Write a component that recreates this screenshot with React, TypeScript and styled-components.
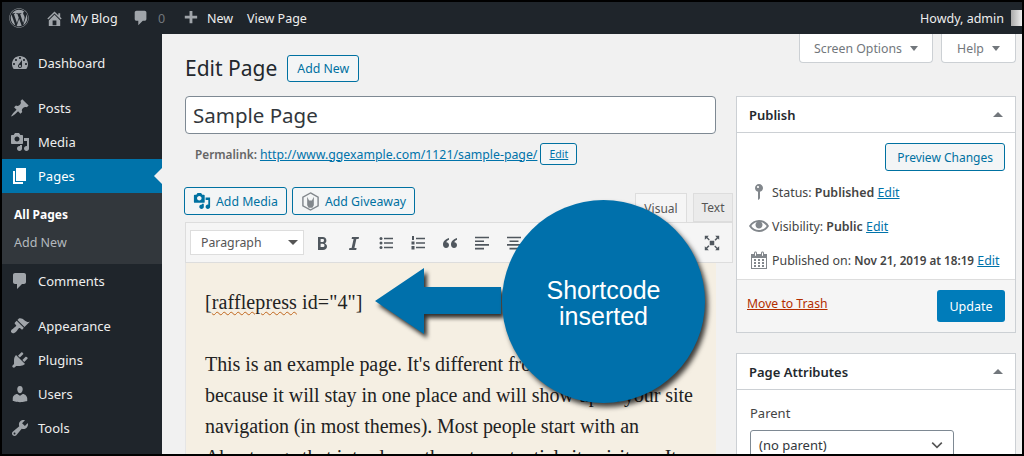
import React from "react";
import styled, { createGlobalStyle } from "styled-components";
import { FaWordpress } from "react-icons/fa";

const Global = createGlobalStyle`
  html, body { margin: 0; padding: 0; background: #000; }
  * { box-sizing: border-box; }
`;

const d = {
  home: "M16 8.5l1.53 1.53-1.06 1.06L10 4.62l-6.47 6.47-1.06-1.06L10 2.5l4 4v-2h2v4zm-6-2.46l6 5.99V18H4v-5.97zM12 17v-5H8v5h4z",
  comment: "M5 2h9c1.1 0 2 .9 2 2v7c0 1.1-.9 2-2 2h-2l-5 5v-5H5c-1.1 0-2-.9-2-2V4c0-1.1.9-2 2-2z",
  plus: "M17 7v3h-5v5H9v-5H4V7h5V2h3v5h5z",
  dashboard: "M3.76 16h12.48c1.1-1.37 1.76-3.11 1.76-5 0-4.42-3.58-8-8-8s-8 3.58-8 8c0 1.89.66 3.63 1.76 5zM10 4c.55 0 1 .45 1 1s-.45 1-1 1-1-.45-1-1 .45-1 1-1zM6 6c.55 0 1 .45 1 1s-.45 1-1 1-1-.45-1-1 .45-1 1-1zm8 0c.55 0 1 .45 1 1s-.45 1-1 1-1-.45-1-1 .45-1 1-1zm-5.37 5.55L12 7v6c0 1.1-.9 2-2 2s-2-.9-2-2c0-.57.24-1.08.63-1.45zM4 10c.55 0 1 .45 1 1s-.45 1-1 1-1-.45-1-1 .45-1 1-1zm12 0c.55 0 1 .45 1 1s-.45 1-1 1-1-.45-1-1 .45-1 1-1zm-5 3c0-.55-.45-1-1-1s-1 .45-1 1 .45 1 1 1 1-.45 1-1z",
  post: "M10.44 3.02l1.82-1.82 6.36 6.35-1.83 1.82c-1.05-.68-2.48-.57-3.41.36l-.75.75c-.92.93-1.04 2.35-.35 3.41l-1.83 1.82-2.41-2.41-2.8 2.79c-.42.42-3.38 2.71-3.8 2.29s1.86-3.39 2.28-3.81l2.79-2.79L4.1 9.36l1.83-1.82c1.05.69 2.48.57 3.4-.36l.75-.75c.93-.92 1.05-2.35.36-3.41z",
  media: "M13 11V4c0-.55-.45-1-1-1h-1.67L9 1H5L3.67 3H2c-.55 0-1 .45-1 1v7c0 .55.45 1 1 1h10c.55 0 1-.45 1-1zM7 4.5c1.38 0 2.5 1.12 2.5 2.5S8.38 9.5 7 9.5 4.5 8.38 4.5 7 5.62 4.5 7 4.5zM14 6h5v10.5c0 1.38-1.12 2.5-2.5 2.5S14 17.88 14 16.5s1.12-2.5 2.5-2.5c.17 0 .34.02.5.05V9h-3V6zm-4 8.05V13h2v3.5c0 1.38-1.12 2.5-2.5 2.5S7 17.88 7 16.5 8.12 14 9.5 14c.17 0 .34.02.5.05z",
  page: "M6 15V2h10v13H6zm-1 1h8v2H3V5h2v11z",
  appearance: "M14.48 11.06L7.41 3.99l1.5-1.5c.5-.56 2.3-.47 3.51.32 1.21.8 1.43 1.28 2.91 2.1 1.18.64 2.45 1.26 4.45.85zm-.71.71L6.7 4.7 4.93 6.47c-.39.39-.39 1.02 0 1.41l1.06 1.06c.39.39.39 1.03 0 1.42-.6.6-1.43 1.11-2.21 1.69-.35.26-.7.53-1.01.84C1.43 13.23.28 15.32 1.57 16.61c1.3 1.3 3.38.14 4.72-1.21.31-.31.58-.66.84-1.01.58-.78 1.09-1.61 1.69-2.21.39-.39 1.02-.39 1.41 0l1.06 1.06c.39.39 1.02.39 1.41 0z",
  plugin: "M13.11 4.36L9.87 7.6 8 5.73l3.24-3.24c.35-.34 1.05-.2 1.56.32.52.51.66 1.21.31 1.55zm-8 1.77l.91-1.12 9.01 9.01-1.19.84c-.71.71-2.63 1.16-3.82 1.16H6.14L4.9 17.26c-.59.59-1.54.59-2.12 0-.59-.58-.59-1.53 0-2.12l1.24-1.24v-3.88c0-1.13.4-3.19 1.09-3.89zm7.26 3.97l3.24-3.24c.34-.35 1.04-.21 1.55.31.52.51.66 1.21.31 1.55l-3.24 3.25z",
  users: "M10 9.25c-2.27 0-2.73-3.44-2.73-3.44C7 4.02 7.82 2 9.97 2c2.16 0 2.98 2.02 2.71 3.81 0 0-.41 3.44-2.68 3.44zm0 2.57L12.72 10c2.39 0 4.52 2.33 4.52 4.53v2.49s-3.65 1.13-7.24 1.13c-3.65 0-7.24-1.13-7.24-1.13v-2.49c0-2.25 1.94-4.48 4.47-4.48z",
  tools: "M16.68 9.77c-1.34 1.34-3.3 1.67-4.95.99l-5.41 6.52c-.99.99-2.59.99-3.58 0s-.99-2.59 0-3.57l6.52-5.42c-.68-1.65-.35-3.61.99-4.95 1.28-1.28 3.12-1.62 4.72-1.06l-2.89 2.89 2.82 2.82 2.86-2.87c.53 1.58.18 3.39-1.08 4.65zM3.81 16.21c.4.39 1.04.39 1.43 0 .4-.4.4-1.04 0-1.43-.39-.4-1.03-.4-1.43 0-.39.39-.39 1.03 0 1.43z",
  key: "M14 6c0 1.86-1.28 3.41-3 3.86V16c0 1-2 2-2 2V9.86c-1.72-.45-3-2-3-3.86 0-2.21 1.79-4 4-4s4 1.79 4 4zM8 5c0 .55.45 1 1 1s1-.45 1-1-.45-1-1-1-1 .45-1 1z",
  eye: "M19.7 9.4C17.7 6 14 3.9 10 3.9S2.3 6 .3 9.4L0 10l.3.6c2 3.4 5.7 5.5 9.7 5.5s7.7-2.1 9.7-5.5l.3-.6-.3-.6zM10 14.1c-3.1 0-6-1.6-7.7-4.1C3.6 8 5.7 6.6 8 6.1c-.9.6-1.5 1.7-1.5 2.9 0 1.9 1.6 3.5 3.5 3.5s3.5-1.6 3.5-3.5c0-1.2-.6-2.3-1.5-2.9 2.3.5 4.4 1.9 5.7 3.9-1.7 2.5-4.6 4.1-7.7 4.1z",
  calendar: "M15 4h3v15H2V4h3V3c0-.41.15-.76.44-1.06.29-.29.65-.44 1.06-.44s.77.15 1.06.44c.29.3.44.65.44 1.06v1h4V3c0-.41.15-.76.44-1.06.29-.29.65-.44 1.06-.44s.77.15 1.06.44c.29.3.44.65.44 1.06v1zM6 3v2.5c0 .14.05.26.15.36.09.09.21.14.35.14s.26-.05.35-.14c.1-.1.15-.22.15-.36V3c0-.14-.05-.26-.15-.35-.09-.1-.21-.15-.35-.15s-.26.05-.35.15c-.1.09-.15.21-.15.35zm7 0v2.5c0 .14.05.26.14.36.1.09.22.14.36.14s.26-.05.36-.14c.09-.1.14-.22.14-.36V3c0-.14-.05-.26-.14-.35-.1-.1-.22-.15-.36-.15s-.26.05-.36.15c-.09.09-.14.21-.14.35zm4 15V8H3v10h14zM7 9v2H5V9h2zm2 0h2v2H9V9zm4 2V9h2v2h-2zm-6 1v2H5v-2h2zm2 0h2v2H9v-2zm4 2v-2h2v2h-2zm-6 1v2H5v-2h2zm4 2H9v-2h2v2zm4 0h-2v-2h2v2z",
};

const IconSvg = styled.svg` flex: none; `;
const Icon = ({ p, size = 20, color = "currentColor" }: { p: string; size?: number; color?: string }) => (
  <IconSvg width={size} height={size} viewBox="0 0 20 20" fill={color}><path d={p} /></IconSvg>
);

const Frame = styled.div`
  position: relative;
  width: 1024px; height: 456px; overflow: hidden;
  border: 2px solid #000;
  background: #f1f1f1;
  display: flex; flex-direction: column;
  font-family: "Noto Sans", sans-serif; font-size: 13px; color: #444;
`;
const TopBar = styled.header`
  height: 32px; flex: none; background: #1f252b; color: #eee;
  display: flex; align-items: center; padding-left: 7px; font-size: 12.5px;
  svg { color: #a0a5aa; }
`;
const BarItem = styled.span<{ $w: number; $gap?: number }>`
  width: ${p => p.$w}px; flex: none; display: flex; align-items: center; gap: ${p => p.$gap ?? 8}px; white-space: nowrap;
`;
const Muted = styled.span` color: #72777c; `;
const Howdy = styled.div`
  margin-left: auto; display: flex; align-items: center; gap: 7px;
`;
const Avatar = styled.span`
  width: 11px; height: 16px; background: linear-gradient(90deg, #aaa, #eee);
`;
const Body = styled.div` flex: 1; display: flex; min-height: 0; `;
const Side = styled.nav`
  width: 160px; flex: none; background: #1f252b; padding-top: 12px; color: #eee;
`;
const Item = styled.div<{ $active?: boolean; $gap?: boolean }>`
  position: relative;
  height: 34px; display: flex; align-items: center; gap: 8px; padding-left: 8px;
  margin-top: ${p => (p.$gap ? "11px" : "0")};
  background: ${p => (p.$active ? "#0073aa" : "transparent")};
  color: ${p => (p.$active ? "#fff" : "#eee")};
  svg { color: ${p => (p.$active ? "#fff" : "#a0a5aa")}; }
  ${p => p.$active ? `&::after { content: ""; position: absolute; right: 0; top: 9px; border: 8px solid transparent; border-right-color: #f1f1f1; border-left-width: 0; }` : ""}
`;
const Sub = styled.div`
  height: 71px; background: #32373c; padding: 8px 0 0 12px; display: flex; flex-direction: column;
`;
const SubLink = styled.div<{ $on?: boolean }>`
  height: 28px; line-height: 28px; font-size: ${p => (p.$on ? 12 : 12.5)}px; font-weight: ${p => (p.$on ? 700 : 400)};
  color: ${p => (p.$on ? "#fff" : "#b4b9be")};
`;
const Main = styled.main` position: relative; flex: 1; display: flex; padding-left: 23px; min-width: 0; `;
const Left = styled.div` width: 548px; flex: none; `;
const Right = styled.aside` width: 280px; flex: none; margin-left: 3px; padding-top: 62px; `;
const HeadRow = styled.div` height: 62px; display: flex; align-items: center; gap: 10px; padding-top: 6px; `;
const H1 = styled.h1` margin: 0; font-size: 21px; font-weight: 400; color: #23282d; `;
const OutlineBtn = styled.a<{ $h?: number; $fs?: number; $px?: number }>`
  display: inline-flex; align-items: center; justify-content: center; gap: 5px;
  height: ${p => p.$h ?? 28}px; padding: 0 ${p => p.$px ?? 9}px; border: 1px solid #0071a1; border-radius: 3px;
  color: #0071a1; background: #f3f5f6; font-size: ${p => p.$fs ?? 12.3}px; white-space: nowrap;
`;
const TitleInput = styled.div`
  width: 531px; height: 38px; background: #fff; border: 1px solid #7e8993; border-radius: 4px;
  display: flex; align-items: center; padding-left: 7px; font-size: 20.5px; color: #32373c;
`;
const Permalink = styled.div`
  height: 22px; margin: 9px 0 0 10px; display: flex; align-items: center; gap: 3px; font-size: 12.3px; color: #666;
  b { font-weight: 600; font-size: 11.8px; margin-right: 0; }
  a { color: #0073aa; text-decoration: underline; }
`;
const EditorTop = styled.div`
  margin: 22px 0 0 -1px; height: 35px; display: flex; align-items: flex-start; gap: 5px; position: relative;
`;
const Tabs = styled.div`
  margin-left: auto; height: 29px; align-self: flex-end; display: flex; gap: 6px;
`;
const Tab = styled.div<{ $on?: boolean }>`
  height: 29px; display: flex; align-items: center; justify-content: center; width: ${p => (p.$on ? 52 : 40)}px;
  border: 1px solid #ddd; border-bottom: ${p => (p.$on ? "0" : "1px solid #ddd")};
  background: ${p => (p.$on ? "#f5f5f5" : "#ebebeb")}; color: #555; font-size: 12px;
`;
const Toolbar = styled.div`
  height: 41px; border: 1px solid #ddd; background: #f5f5f5; padding: 6px 5px 6px 4px; display: flex; align-items: center; color: #50575e;
`;
const Select = styled.div`
  width: 114px; height: 25px; background: #fff; border: 1px solid #ddd; display: flex; align-items: center;
  justify-content: space-between; padding: 0 5px 0 10px; font-size: 12.3px; color: #555; margin-right: 2px;
  &::after { content: ""; border: 5px solid transparent; border-top-color: #555; border-bottom-width: 0; }
`;
const ToolBtn = styled.span`
  width: 32px; height: 24px; flex: none; display: flex; align-items: center; justify-content: center;
`;
const ToolEnd = styled(ToolBtn)` margin-left: auto; margin-right: -1px; `;
const Content = styled.div`
  width: 531px; height: 200px; background: #f5efe3; padding: 24px 0 0 19px; overflow: hidden;
  font-family: "Liberation Serif", serif; font-size: 20px; line-height: 31px; color: #222; border-left: 1px solid #e5e5e5;
`;
const Para = styled.p<{ $ls?: number }>` margin: 0 0 31px; white-space: nowrap; letter-spacing: ${p => p.$ls ?? 0}px; `;
const Squiggle = styled.span` text-decoration: underline wavy #c0651c 1px; text-underline-offset: 2px; `;
const MetaBox = styled.section<{ $mt?: number }>`
  background: #fff; border: 1px solid #ccd0d4; margin-top: ${p => p.$mt ?? 0}px;
`;
const MetaHead = styled.div`
  height: 36px; border-bottom: 1px solid #ccd0d4; padding: 0 12px; display: flex; align-items: center; justify-content: space-between;
  font-size: 13px; font-weight: 600; color: #23282d;
  &::after { content: ""; border: 5px solid transparent; border-bottom-color: #72777c; border-top-width: 0; }
`;
const PublishBody = styled.div` padding: 10px 10px 0 12px; height: 146px; display: flex; flex-direction: column; `;
const PreviewRow = styled.div` display: flex; justify-content: flex-end; margin-bottom: 4px; `;
const MetaRow = styled.div`
  height: 34px; display: flex; align-items: center; gap: 3px; color: #444; font-size: 12.4px; white-space: nowrap;
  svg { color: #82878c; }
  b { font-weight: 600; }
  a { color: #0073aa; text-decoration: underline; }
`;
const DateText = styled.b` font-size: 11.7px; `;
const Footer = styled.div`
  height: 53px; background: #f5f5f5; border-top: 1px solid #ddd; padding: 0 10px; display: flex; align-items: center; justify-content: space-between;
  a { color: #b32d00; text-decoration: underline; font-size: 12.2px; margin-top: -6px; }
`;
const Update = styled.span`
  width: 68px; height: 32px; display: flex; align-items: center; justify-content: center; background: #007cba; color: #fff; border-radius: 3px; font-size: 12.5px;
`;
const AttrBody = styled.div` padding: 14px 13px; color: #444; `;
const ParentSelect = styled.div`
  width: 204px; height: 30px; margin-top: 8px; background: #fff; border: 1px solid #7e8993; border-radius: 3px;
  display: flex; align-items: center; justify-content: space-between; padding: 0 8px; font-size: 13px; color: #32373c;
`;
const ScreenTabs = styled.div`
  position: absolute; top: 0; right: 6px; display: flex; gap: 8px;
`;
const ScreenTab = styled.div<{ $w: number }>`
  width: ${p => p.$w}px; height: 29px; background: #fff; border: 1px solid #ccd0d4; border-top: 0; border-radius: 0 0 4px 4px;
  display: flex; align-items: center; justify-content: center; gap: 8px; font-size: 12.3px; color: #72777c;
  &::after { content: ""; border: 4px solid transparent; border-top: 5px solid #72777c; border-bottom-width: 0; }
`;
const Callout = styled.div`
  position: absolute; left: 340px; top: 166px; width: 203px; height: 203px; border-radius: 50%; padding-top: 2px;
  background: #0070ab; box-shadow: 3px 4px 5px rgba(0,0,0,.75);
  display: flex; align-items: center; justify-content: center; text-align: center;
  font-family: "Liberation Sans", sans-serif; font-size: 25px; line-height: 26px; color: #fff;
`;
const Arrow = styled.svg`
  position: absolute; left: 209px; top: 230px; overflow: visible;
  filter: drop-shadow(3px 4px 2px rgba(0,0,0,.8));
`;

const stroke = { stroke: "currentColor", strokeWidth: 1.6, fill: "none" };

export default function App() {
  return (
    <Frame>
      <Global />
      <TopBar>
        <BarItem $w={36}><FaWordpress size={20} /></BarItem>
        <BarItem $w={87} $gap={6}><Icon p={d.home} size={19} /><span>My Blog</span></BarItem>
        <BarItem $w={49}><Icon p={d.comment} size={18} /><Muted>0</Muted></BarItem>
        <BarItem $w={66} $gap={7}><Icon p={d.plus} size={19} /><span>New</span></BarItem>
        <BarItem $w={70}>View Page</BarItem>
        <Howdy>Howdy, admin<Avatar /></Howdy>
      </TopBar>
      <Body>
        <Side>
          <Item><Icon p={d.dashboard} />Dashboard</Item>
          <Item $gap><Icon p={d.post} />Posts</Item>
          <Item><Icon p={d.media} />Media</Item>
          <Item $active><Icon p={d.page} />Pages</Item>
          <Sub><SubLink $on>All Pages</SubLink><SubLink>Add New</SubLink></Sub>
          <Item><Icon p={d.comment} />Comments</Item>
          <Item $gap><Icon p={d.appearance} />Appearance</Item>
          <Item><Icon p={d.plugin} />Plugins</Item>
          <Item><Icon p={d.users} />Users</Item>
          <Item><Icon p={d.tools} />Tools</Item>
        </Side>
        <Main>
          <Left>
            <HeadRow><H1>Edit Page</H1><OutlineBtn $h={27}>Add New</OutlineBtn></HeadRow>
            <TitleInput>Sample Page</TitleInput>
            <Permalink><b>Permalink:</b><a>http://www.ggexample.com/1121/sample-page/</a><OutlineBtn $h={22} $fs={10.5} $px={8}>Edit</OutlineBtn></Permalink>
            <EditorTop>
              <OutlineBtn $px={8}><Icon p={d.media} size={18} color="#0071a1" /><span>Add Media</span></OutlineBtn>
              <OutlineBtn $px={8}>
                <svg width="19" height="19" viewBox="0 0 20 20"><path d="M10 1l8 4.500v9L10 19l-8-4.500v-9z" fill="none" stroke="#82878c" strokeWidth="1.5" /><path d="M6.500 5l2 4h3l2-4v9l-1.500 2.500H8L6.500 14z" fill="#82878c" /></svg>
                <span>Add Giveaway</span>
              </OutlineBtn>
              <Tabs><Tab $on>Visual</Tab><Tab>Text</Tab></Tabs>
            </EditorTop>
            <Toolbar>
              <Select>Paragraph</Select>
              <ToolBtn><svg width="20" height="20" viewBox="0 0 20 20" fill="currentColor"><path d="M6 4v13h5c2.300 0 4-1.300 4-3.500 0-1.500-.8-2.600-2.200-3.100 1-.5 1.600-1.400 1.600-2.600C14.400 5.200 13 4 10.800 4zm2.600 2h1.900c1 0 1.500.5 1.500 1.400s-.6 1.500-1.500 1.500H8.600zm0 4.800h2.100c1.200 0 1.800.7 1.800 1.700s-.7 1.600-1.800 1.600H8.600z" /></svg></ToolBtn>
              <ToolBtn><svg width="20" height="20" viewBox="0 0 20 20" fill="currentColor"><path d="M8 4h7l-.4 2h-2.200l-2 9h2.200l-.4 2H5l.4-2h2.200l2-9H7.600z" /></svg></ToolBtn>
              <ToolBtn><svg width="20" height="20" viewBox="0 0 20 20"><g fill="currentColor"><circle cx="5" cy="5.500" r="1.500" /><circle cx="5" cy="10" r="1.500" /><circle cx="5" cy="14.500" r="1.500" /></g><path d="M8 5.500h9M8 10h9M8 14.500h9" {...stroke} /></svg></ToolBtn>
              <ToolBtn><svg width="20" height="20" viewBox="0 0 20 20"><g fill="currentColor"><rect x="4" y="3" width="2" height="4" /><rect x="3.500" y="8.500" width="3" height="3" /><rect x="3.500" y="13" width="3" height="3.500" /></g><path d="M8 5.500h9M8 10h9M8 14.500h9" {...stroke} /></svg></ToolBtn>
              <ToolBtn><svg width="20" height="20" viewBox="0 0 20 20" fill="currentColor"><path d="M9 5C5.500 6 3 8.300 3 11.500 3 13.700 4.300 15 6 15s3-1.300 3-3-1.200-2.800-2.700-2.800c.3-1 1.400-1.900 2.700-2.400zM17 5c-3.500 1-6 3.300-6 6.500 0 2.200 1.300 3.500 3 3.500s3-1.300 3-3-1.200-2.800-2.700-2.800c.3-1 1.400-1.900 2.700-2.400z" /></svg></ToolBtn>
              <ToolBtn><svg width="20" height="20" viewBox="0 0 20 20"><path d="M3 4.500h14M3 8.200h9M3 11.900h14M3 15.600h9" {...stroke} /></svg></ToolBtn>
              <ToolBtn><svg width="20" height="20" viewBox="0 0 20 20"><path d="M3 4.500h14M5.500 8.200h9M3 11.900h14M5.500 15.600h9" {...stroke} /></svg></ToolBtn>
              <ToolEnd><svg width="18" height="18" viewBox="0 0 20 20" fill="currentColor"><path d="M7.500 7.500h5v5h-5z" /><path d="M2 2h4.500L5 3.500 7.500 6l-1 1.200L4 4.700 2 6.500zM18 2v4.500L16.500 5 14 7.500l-1.200-1L15.300 4 13.500 2zM2 18v-4.500L3.500 15 6 12.500l1.200 1L4.700 16l1.800 2zM18 18h-4.500l1.500-1.500-2.500-2.500 1-1.200 2.500 2.500 2-1.800z" /></svg></ToolEnd>
            </Toolbar>
            <Content>
              <Para $ls={0.1}>[<Squiggle>rafflepress</Squiggle> id="4"]</Para>
              <Para $ls={-0.06}>
                This is an example page. It's different from a blog post<br />
                because it will stay in one place and will show up in your site<br />
                navigation (in most themes). Most people start with an<br />
                About page that introduces them to potential site visitors. It
              </Para>
            </Content>
          </Left>
          <Right>
            <MetaBox>
              <MetaHead>Publish</MetaHead>
              <PublishBody>
                <PreviewRow><OutlineBtn $px={11} $fs={12}>Preview Changes</OutlineBtn></PreviewRow>
                <MetaRow><Icon p={d.key} /><span>Status: <b>Published</b> <a>Edit</a></span></MetaRow>
                <MetaRow><Icon p={d.eye} /><span>Visibility: <b>Public</b> <a>Edit</a></span></MetaRow>
                <MetaRow><Icon p={d.calendar} /><span>Published on: <DateText>Nov 21, 2019 at 18:19</DateText> <a>Edit</a></span></MetaRow>
              </PublishBody>
              <Footer><a>Move to Trash</a><Update>Update</Update></Footer>
            </MetaBox>
            <MetaBox $mt={20}>
              <MetaHead>Page Attributes</MetaHead>
              <AttrBody>
                Parent
                <ParentSelect>(no parent)
                  <svg width="16" height="16" viewBox="0 0 20 20"><path d="M4 7l6 6 6-6" fill="none" stroke="#555" strokeWidth="2" /></svg>
                </ParentSelect>
              </AttrBody>
            </MetaBox>
          </Right>
          <ScreenTabs><ScreenTab $w={134}>Screen Options</ScreenTab><ScreenTab $w={75}>Help</ScreenTab></ScreenTabs>
          <Arrow width="130" height="74" viewBox="0 0 130 74"><path d="M4 37L53 4v19h77v27H53v20z" fill="#0070ab" /></Arrow>
          <Callout>Shortcode<br />inserted</Callout>
        </Main>
      </Body>
    </Frame>
  );
}
